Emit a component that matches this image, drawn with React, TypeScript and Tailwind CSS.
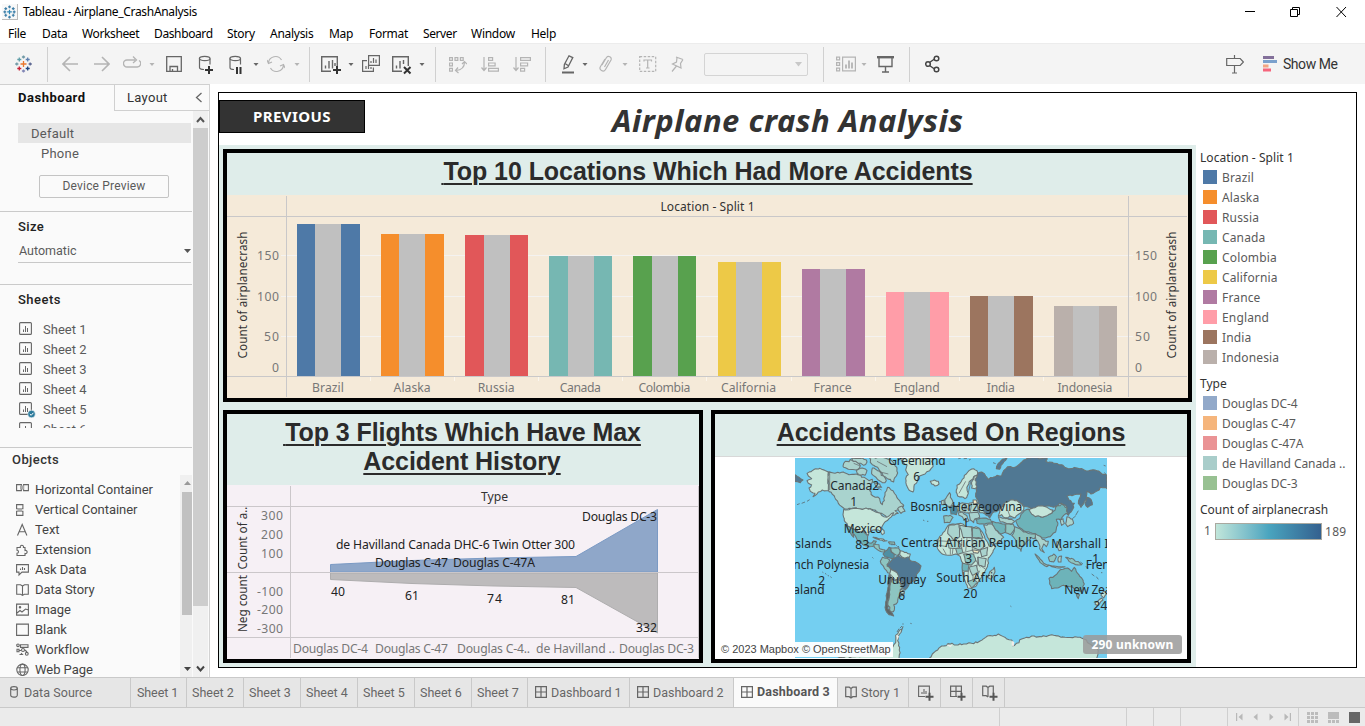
import React from "react";

const NOTO = "font-['Noto_Sans',sans-serif]";
const ROBO = "font-['Roboto',sans-serif]";

type Pt = [number, number];

/* ---------- small helpers ---------- */

function Icon({ w, h = 24, className = "", children }: { w: number; h?: number; className?: string; children: React.ReactNode }) {
  return (
    <svg width={w} height={h} viewBox={`0 0 ${w} ${h}`} fill="none" className={`shrink-0 ${className}`}>
      {children}
    </svg>
  );
}

function Caret({ className = "" }: { className?: string }) {
  return (
    <Icon w={6} className={className}>
      <path d="M.5 11h5l-2.500 3z" fill="currentColor" />
    </Icon>
  );
}

function Sep({ className = "" }: { className?: string }) {
  return <div className={`h-[35px] w-px shrink-0 bg-[#d0d0d0] ${className}`} />;
}

function plus(x: number, y: number, r: number, c: string, k: string) {
  return <path key={k} d={`M${x - r} ${y}h${2 * r}M${x} ${y - r}v${2 * r}`} stroke={c} strokeWidth="1.300" />;
}

/* ---------- title bar and menu ---------- */

function TitleBar() {
  const dots: Pt[] = [[8, 3], [4, 5], [12, 5], [3, 8.5], [13, 8.5], [4, 12], [12, 12], [8, 14]];
  return (
    <div className="flex h-[23px] shrink-0 items-center bg-white">
      <svg width="16" height="16" viewBox="0 0 16 16" className="ml-[2px] shrink-0 border-b border-r border-[#bbb] bg-[#f8f8f8]">
        {dots.map((d, i) => plus(d[0], d[1], 1.5, "#3d7ea8", "d" + i))}
        {plus(8, 8.5, 2.5, "#2f86b5", "c")}
      </svg>
      <div className={`ml-[5px] text-[12px] tracking-[-0.32px] text-black ${NOTO}`}>Tableau - Airplane_CrashAnalysis</div>
      <svg width="110" height="20" viewBox="1245 0 110 20" fill="none" stroke="#000" className="ml-auto mr-[10px]">
        <path d="M1245 9.500h10" />
        <path d="M1290.500 7.500h7v7h-7zM1292.500 7.500v-2h7v7h-2" />
        <path d="M1336.500 5l9.500 10M1346 5l-9.500 10" />
      </svg>
    </div>
  );
}

function MenuBar() {
  return (
    <div className={`flex h-[20px] shrink-0 items-center bg-white pl-[8px] pt-[2px] text-[12px] tracking-[-0.28px] text-black ${NOTO}`}>
      <span className="w-[34px]">File</span>
      <span className="w-[40px]">Data</span>
      <span className="w-[72px] tracking-[-0.38px]">Worksheet</span>
      <span className="w-[73px] tracking-[-0.38px]">Dashboard</span>
      <span className="w-[43px]">Story</span>
      <span className="w-[59px]">Analysis</span>
      <span className="w-[40px]">Map</span>
      <span className="w-[54px]">Format</span>
      <span className="w-[48px] tracking-[-0.4px]">Server</span>
      <span className="w-[60px]">Window</span>
      <span>Help</span>
    </div>
  );
}

/* ---------- toolbar ---------- */

function Toolbar() {
  return (
    <div className="flex h-[41px] shrink-0 items-center border-t border-[#ececec] bg-[#f4f4f4] pl-[15px] text-[#b4b4b4]">
      <Icon w={17}>
        {plus(8.5, 12, 3, "#e8762d", "a")}
        {plus(8.5, 5, 1.6, "#7099a6", "b")}
        {plus(8.5, 19, 1.6, "#8186b5", "c")}
        {plus(1.8, 12, 1.6, "#7099a6", "d")}
        {plus(15.2, 12, 1.6, "#5b6591", "e")}
        {plus(4.3, 7.5, 2, "#5f9ea8", "f")}
        {plus(12.7, 7.5, 2, "#5c7faf", "g")}
        {plus(4.3, 16.500, 2, "#c72035", "h")}
        {plus(12.7, 16.500, 2, "#1f447e", "i")}
      </Icon>
      <Sep className="ml-[15px]" />
      <Icon w={16} className="ml-[14px]"><path d="M16 12H1.500M8 5l-7 7 7 7" stroke="currentColor" strokeWidth="1.600" /></Icon>
      <Icon w={16} className="ml-[16px]"><path d="M0 12h14.500M8 5l7 7-7 7" stroke="currentColor" strokeWidth="1.600" /></Icon>
      <Icon w={18} className="ml-[13px]"><path d="M5 8H4a3.500 3.500 0 0 0 0 7h10a3.500 3.500 0 0 0 2-6.500M5 8h7M10 4.500L13.500 8 10 11" stroke="currentColor" strokeWidth="1.300" /></Icon>
      <Caret className="ml-[8px]" />
      <Icon w={16} className="ml-[11px] text-[#666]"><path d="M.7 4.700h14.600v14.600H.7zM4 19v-4.500h7.500V19M6.500 19v-2" stroke="currentColor" strokeWidth="1.300" /></Icon>
      <Icon w={16} className="ml-[16px] text-[#666]">
        <path d="M6 17.500c-3 0-4.500-.8-4.500-2V6.500M12 6.500v6" stroke="currentColor" strokeWidth="1.200" />
        <ellipse cx="6.700" cy="6.500" rx="5.300" ry="2.200" stroke="currentColor" strokeWidth="1.200" />
        <path d="M7 18h8M11 14v8" stroke="#333" strokeWidth="2" />
      </Icon>
      <Icon w={14} className="ml-[15px] text-[#666]">
        <path d="M5 17.500c-3 0-4-.8-4-2V6.500M11.500 6.500v6" stroke="currentColor" strokeWidth="1.200" />
        <ellipse cx="6.200" cy="6.500" rx="5.300" ry="2.200" stroke="currentColor" strokeWidth="1.200" />
        <path d="M8 15v7M11.500 15v7" stroke="#333" strokeWidth="2" />
      </Icon>
      <Caret className="ml-[10px] text-[#666]" />
      <Icon w={18} className="ml-[8px]">
        <path d="M1.500 11a7 7 0 0 1 13-3M16.500 13a7 7 0 0 1-13 3M0 8l1.500 3.500L5 10M18 16l-1.500-3.500L13 14" stroke="currentColor" strokeWidth="1.200" />
      </Icon>
      <Caret className="ml-[9px]" />
      <Sep className="ml-[9px]" />
      <Icon w={20} className="ml-[11px] text-[#666]">
        <path d="M10 19.300H.7V4.700h15.600V14M4.500 16.500v-3M8 16.500V9M11.500 16.500V8M14 14v-3" stroke="currentColor" strokeWidth="1.400" />
        <path d="M12 18h8M16 14v8" stroke="#333" strokeWidth="2" />
      </Icon>
      <Caret className="ml-[7px] text-[#666]" />
      <Icon w={18} className="ml-[8px] text-[#666]">
        <path d="M6.600 3.600h10.800v9.800H6.600zM5 8.600H.6v10.800h10.800v-4M9 11V9M11.500 11V6M14 11V7.500M4 17v-3M6.500 17v-3.500M9 17v-2" stroke="currentColor" strokeWidth="1.200" />
      </Icon>
      <Icon w={20} className="ml-[12px] text-[#666]">
        <path d="M10 19.300H.7V4.700h15.600V14M4.500 16.500v-3M8 16.500V9M11.500 12V8" stroke="currentColor" strokeWidth="1.400" />
        <path d="M12 15l6.500 6.500M18.500 15L12 21.500" stroke="#333" strokeWidth="2" />
      </Icon>
      <Caret className="ml-[7px] text-[#666]" />
      <Sep className="ml-[10px]" />
      <Icon w={18} className="ml-[13px]">
        <path d="M.6 5.600h2.800v2.800H.6zM6 5.600h2.800v2.800H6zM11.400 5.600h2.800v2.800h-2.800zM.6 11h2.800v2.800H.6zM.6 16.400h2.800v2.800H.6zM15.500 10c0 5-2.500 8-8.500 8.500M13 12l2.500-2.500L18 12M9 15.500L6.500 18.500l3 2.500" stroke="currentColor" strokeWidth="1.200" />
      </Icon>
      <Icon w={18} className="ml-[14px]">
        <path d="M3 5v13M.5 15.500L3 18.500l2.500-3M7.600 5.600h4v2.800h-4zM7.600 11h6.500v2.800H7.600zM7.600 16.400h9.800v2.800H7.600z" stroke="currentColor" strokeWidth="1.200" />
      </Icon>
      <Icon w={18} className="ml-[14px]">
        <path d="M3 5v13M.5 15.500L3 18.500l2.500-3M7.600 5.600h9.800v2.800H7.600zM7.600 11h7v2.800h-7zM7.600 16.400h4v2.800h-4z" stroke="currentColor" strokeWidth="1.200" />
      </Icon>
      <Sep className="ml-[14px]" />
      <Icon w={14} className="ml-[15px] text-[#666]">
        <path d="M8 3.800l3.800 1.800-4.800 9.400-4 1.800.4-4.400zM4 11.500l3.500 2.200" stroke="currentColor" strokeWidth="1.300" />
        <path d="M1 20.500h12" stroke="currentColor" strokeWidth="2" />
      </Icon>
      <Caret className="ml-[7px] text-[#666]" />
      <Icon w={14} className="ml-[11px]">
        <path d="M3 13l4.500-7.500a2.600 2.600 0 0 1 4.500 2.500L6.500 17.500a2.900 2.900 0 0 1-5-3L6 7M9.500 8L5.500 15" stroke="currentColor" strokeWidth="1.200" />
      </Icon>
      <Caret className="ml-[9px]" />
      <Icon w={18} className="ml-[11px]">
        <path d="M.7 4.700h16v14.600H.7z" stroke="currentColor" strokeWidth="1.200" strokeDasharray="2.500 1.500" />
        <path d="M5 9.500V8h7.500v1.500M8.700 8v8M7 16h3.500" stroke="currentColor" strokeWidth="1.200" />
      </Icon>
      <Icon w={14} className="ml-[14px]">
        <path d="M5 5l7 2.500M6 5.500L5.500 10 1.500 12l8.500 4-.5-4.500L12 7.500M5.500 14L1 19.500" stroke="currentColor" strokeWidth="1.200" />
      </Icon>
      <div className="ml-[19px] flex h-[23px] w-[104px] shrink-0 items-center justify-end rounded-[2px] border border-[#d4d4d4] pr-[5px] text-[#c8c8c8]">
        <svg width="7" height="5" viewBox="0 0 7 5"><path d="M0 0h7L3.500 4.500z" fill="currentColor" /></svg>
      </div>
      <Sep className="ml-[15px]" />
      <Icon w={20} className="ml-[12px]">
        <path d="M.6 5.100h3v2.800h-3zM.6 10.600h3v2.800h-3zM.6 16.100h3v2.800h-3zM6.600 5.100h12.800v13.800H6.600z" stroke="currentColor" strokeWidth="1.200" />
        <path d="M10 16.500v-4M13 16.500v-8M16 16.500v-6" stroke="currentColor" strokeWidth="1.800" />
      </Icon>
      <Caret className="ml-[5px]" />
      <Icon w={18} className="ml-[10px] text-[#666]">
        <path d="M0 5.200h17" stroke="currentColor" strokeWidth="2.400" />
        <path d="M2 6v8.500h13V6M8.500 14.500V20M5 20h7" stroke="currentColor" strokeWidth="1.400" />
      </Icon>
      <Sep className="ml-[14px]" />
      <Icon w={15} className="ml-[15px] text-[#444]">
        <path d="M4.500 10.500l5-3.500M4.500 13.500l5 3.500" stroke="currentColor" strokeWidth="1.400" />
        <circle cx="3" cy="12" r="2.300" stroke="currentColor" strokeWidth="1.500" />
        <circle cx="11.500" cy="6.500" r="2.300" stroke="currentColor" strokeWidth="1.500" />
        <circle cx="11.500" cy="17.500" r="2.300" stroke="currentColor" strokeWidth="1.500" />
      </Icon>
      <Icon w={18} className="ml-auto text-[#666]">
        <path d="M.7 6.500h13.500l3.200 3.500-3.200 3.500H.7zM8.500 3v3.500M8.500 13.500V21M6 21h5" stroke="currentColor" strokeWidth="1.200" />
      </Icon>
      <Icon w={15} className="ml-[19px]">
        <path d="M0 4h11v3H0z" fill="#83709a" />
        <path d="M0 8h14v3H0z" fill="#7ba1cd" />
        <path d="M0 12.500h5.500v3H0z" fill="#f3a583" />
        <path d="M0 16.500h8v3H0z" fill="#f6657c" />
      </Icon>
      <span className={`ml-[5px] mr-[27px] w-[55px] whitespace-nowrap text-[14px] tracking-[-0.45px] text-[#333] ${ROBO}`}>Show Me</span>
    </div>
  );
}

/* ---------- left panel ---------- */

function SheetIcon({ checked = false }: { checked?: boolean }) {
  return (
    <svg width="17" height="17" viewBox="0 0 17 17" fill="none" className="shrink-0">
      <rect x=".6" y="1.600" width="11.800" height="11.800" rx="1" stroke="#666" strokeWidth="1.100" />
      <path d="M4.500 11V8.500M6.500 11V5M8.500 11V7" stroke="#666" strokeWidth="1" />
      {checked && <circle cx="12.500" cy="13" r="3.800" fill="#2c7a9b" stroke="#fafafa" strokeWidth=".6" />}
      {checked && <path d="M10.800 13l1.400 1.300 2.200-2.500" stroke="#fff" strokeWidth="1" />}
    </svg>
  );
}

const OBJECTS: { name: string; icon: React.ReactNode }[] = [
  { name: "Horizontal Container", icon: <><path d="M.6 1.600h4.800v6H.6zM7.600 1.600h4.800v6H7.600z" /><path d="M4 2.500h4v4H4z" fill="#aaa" stroke="none" /></> },
  { name: "Vertical Container", icon: <><path d="M.6 1.600h6.300v4.200H.6zM.6 8.200h6.300v4.200H.6z" /><path d="M1.500 5h4.500v4H1.500z" fill="#aaa" stroke="none" /></> },
  { name: "Text", icon: <path d="M1.500 12.500L6.200 1.500l4.700 11M3.200 8.700h6" /> },
  { name: "Extension", icon: <path d="M1 4.500h3.300a1.700 1.700 0 1 1 3.200 0H9v3a1.600 1.600 0 1 1 0 3v2H1V10.300a1.500 1.500 0 1 0 0-3z" /> },
  { name: "Ask Data", icon: <><path d="M.6 1.600h11.800v7.500H6L3 12V9.100H.6z" /><path d="M4.500 7V5.500M6.500 7V4M8.500 7V5" /></> },
  { name: "Data Story", icon: <path d="M6.500 3L4.500 1.700H.7v9.500h4l1.800 1.200 1.800-1.200h4V1.700H8.500zM6.500 3v9" /> },
  { name: "Image", icon: <><path d="M.6 1.100h11.800v11H.6zM1 10l3-2.500 2 1.500 3.500-3 3 1" /><circle cx="4" cy="4.300" r=".7" /></> },
  { name: "Blank", icon: <path d="M.6 1.100h11.800v11.300H.6z" /> },
  { name: "Workflow", icon: <><path d="M4.500 1.800h7.500v2.600H4.500zM3.500 11.500h2.800l-1.300-1.300M9 7l2 2M3 7.500h2" /><circle cx="2" cy="2.300" r="1.300" /><path d="M1 6.300h2v2.400H1z" /><circle cx="7" cy="7" r="1.500" /><circle cx="10.800" cy="10.800" r="1.400" /></> },
  { name: "Web Page", icon: <><circle cx="6.500" cy="6.800" r="5.700" /><ellipse cx="6.500" cy="6.800" rx="2.600" ry="5.700" /><path d="M1.500 4.800h10M1.500 9h10" /></> },
];

function SidePanel() {
  return (
    <div className={`flex w-[210px] shrink-0 flex-col border-r border-[#d2d2d2] bg-[#fafafa] ${ROBO}`}>
      <div className="flex h-[27px] shrink-0 border-t border-[#d0d0d0] text-[13px]">
        <div className="w-[114px] pl-[18px] leading-[25px] font-bold tracking-[0.52px] text-[#111]">Dashboard</div>
        <div className="flex flex-1 items-center border-b border-l border-[#d0d0d0] pl-[12px] tracking-[0.3px] text-[#333]">
          Layout
          <svg width="8" height="12" viewBox="0 0 8 12" fill="none" className="ml-auto mr-[6px]"><path d="M6.500 1L1.500 5.500l5 4.500" stroke="#666" strokeWidth="1.300" /></svg>
        </div>
      </div>
      <div className="flex min-h-0 flex-1">
        <div className="flex w-[192px] flex-col text-[13px] text-[#5a5a5a]">
          <div className="ml-[18px] mr-px mt-[12px] h-[20px] bg-[#e6e6e6] pl-[13px] leading-[21px] tracking-[0.25px]">Default</div>
          <div className="h-[20px] pl-[41px] leading-[21px] tracking-[0.25px]">Phone</div>
          <div className="ml-[39px] mt-[12px] flex h-[23px] w-[130px] shrink-0 items-center justify-center rounded-[2px] border border-[#c4c4c4] pb-px text-[12px] tracking-[0.18px]">Device Preview</div>
          <div className="mt-[13px] h-px shrink-0 bg-[#cacaca]" />
          <div className="ml-[18px] mt-[5px] h-[20px] leading-[20px] font-medium tracking-[0.4px] text-[#222]">Size</div>
          <div className="ml-[18px] mr-px mt-[4px] flex h-[22px] shrink-0 items-center justify-between border-b border-[#c8c8c8] pl-px text-[12.500px]">
            <span>Automatic</span>
            <svg width="7" height="5" viewBox="0 0 7 5"><path d="M0 0h7L3.500 4z" fill="#555" /></svg>
          </div>
          <div className="mt-[21px] h-px shrink-0 bg-[#cacaca]" />
          <div className="ml-[18px] mt-[5px] h-[20px] shrink-0 leading-[20px] font-medium tracking-[0.5px] text-[#222]">Sheets</div>
          <div className="ml-[19px] mt-[9px] h-[109px] shrink-0 overflow-hidden">
            {[1, 2, 3, 4, 5, 6].map((n) => (
              <div key={n} className="flex h-[20px] items-center gap-[7px] leading-[20px]">
                <SheetIcon checked={n === 5} />
                <span className="mt-px">Sheet {n}</span>
              </div>
            ))}
          </div>
          <div className="mt-[19px] h-px shrink-0 bg-[#cacaca]" />
          <div className="ml-[12px] mt-[2px] h-[20px] shrink-0 leading-[20px] font-medium tracking-[0.42px] text-[#333]">Objects</div>
          <div className="mt-[5px] flex min-h-0 flex-1 overflow-hidden">
            <div className="mt-[5px] flex-1 pl-[16px] text-[#444]">
              {OBJECTS.map((o) => (
                <div key={o.name} className="flex h-[20px] items-center gap-[6px] leading-[20px] tracking-[-0.05px]">
                  <svg width="13" height="14" viewBox="0 0 13 14" fill="none" stroke="#666" strokeWidth="1.100" className="shrink-0">{o.icon}</svg>
                  <span className="whitespace-nowrap">{o.name}</span>
                </div>
              ))}
            </div>
            <div className="flex w-[12px] flex-col items-end bg-[#f0f0f0]">
              <svg width="10" height="17" viewBox="0 0 10 17" className="shrink-0"><path d="M2 10h7L5.500 6z" fill="#999" /></svg>
              <div className="h-[123px] w-[10px] bg-[#c1c1c1]" />
              <svg width="10" height="17" viewBox="0 0 10 17" className="mt-auto shrink-0"><path d="M2 7h7l-3.500 4z" fill="#444" /></svg>
            </div>
          </div>
        </div>
        <div className="ml-[1px] flex w-[15px] flex-col bg-[#f0f0f0]">
          <svg width="15" height="17" viewBox="0 0 15 17" fill="none"><path d="M4 11l3.500-4 3.500 4" stroke="#555" strokeWidth="2" /></svg>
          <div className="h-[478px] bg-[#cdcdcd]" />
          <svg width="15" height="17" viewBox="0 0 15 17" fill="none" className="mt-auto"><path d="M4 6.500l3.500 4 3.500-4" stroke="#444" strokeWidth="2" /></svg>
        </div>
      </div>
    </div>
  );
}

/* ---------- charts ---------- */

const LOCATIONS: { name: string; color: string; top: number; w: number }[] = [
  { name: "Brazil", color: "#4e79a7", top: 224, w: 32 },
  { name: "Alaska", color: "#f58e2c", top: 234, w: 37 },
  { name: "Russia", color: "#e15759", top: 235, w: 37 },
  { name: "Canada", color: "#76b7b2", top: 256, w: 41 },
  { name: "Colombia", color: "#58a14e", top: 256, w: 52 },
  { name: "California", color: "#edc947", top: 262, w: 55 },
  { name: "France", color: "#b07aa2", top: 269, w: 38 },
  { name: "England", color: "#ff9da8", top: 292, w: 46 },
  { name: "India", color: "#9c755f", top: 296, w: 28 },
  { name: "Indonesia", color: "#bab0ab", top: 306, w: 55 },
];

function Label({ x, y, w, anchor = "start", color = "#333", size = 12.2, rotate = false, children }: {
  x: number; y: number; w: number; anchor?: "start" | "middle" | "end"; color?: string; size?: number; rotate?: boolean; children: string;
}) {
  return (
    <text x={x} y={y} fill={color} fontSize={size} textAnchor={anchor} textLength={w} transform={rotate ? `rotate(-90 ${x} ${y})` : undefined}>
      {children}
    </text>
  );
}

function LocationChart() {
  return (
    <svg width="961" height="203" viewBox="227 195 961 203" className={`block ${NOTO}`}>
      <rect x="227" y="195" width="961" height="203" fill="#f5ead9" />
      <path d="M281 255.500h852M281 296.500h852M281 336.500h852" stroke="#f4f2f0" />
      {LOCATIONS.slice(1).map((l, i) => (
        <path key={l.name} d={`M${Math.round(370 + i * 84.1)}.500 377v4`} stroke="#fbf6ee" />
      ))}
      <path d="M227 216.500h960M227 376.500h960M286.500 196v201M1128.500 196v201" stroke="#c9c8c9" />
      {LOCATIONS.map((l, i) => {
        const x = Math.round(297 + i * 84.1);
        return (
          <g key={l.name}>
            <rect x={x} y={l.top} width="63" height={376 - l.top} fill={l.color} />
            <rect x={Math.round(315.2 + i * 84.15)} y={l.top} width="26" height={376 - l.top} fill="#c0c0c0" />
            <Label x={328 + i * 84.1} y={392} w={l.w} anchor="middle" color="#777">{l.name}</Label>
          </g>
        );
      })}
      <Label x={707.500} y={211} w={94} anchor="middle" size={12}>Location - Split 1</Label>
      {[["150", 260, 22], ["100", 301, 22], ["50", 341, 15], ["0", 372, 7]].map(([t, y, w]) => (
        <g key={t}>
          <Label x={279} y={y as number} w={w as number} anchor="end" color="#777">{t as string}</Label>
          <Label x={1135} y={y as number} w={w as number} color="#777">{t as string}</Label>
        </g>
      ))}
      <Label x={247} y={358.500} w={127} rotate size={11.7}>Count of airplanecrash</Label>
      <Label x={1176} y={358.500} w={127} rotate size={11.7}>Count of airplanecrash</Label>
    </svg>
  );
}

function FlightChart() {
  return (
    <svg width="472" height="174" viewBox="227 485 472 174" className={`block ${NOTO}`}>
      <rect x="227" y="485" width="472" height="174" fill="#f6f0f5" />
      <path d="M330.500 564.500L412 560.500 494 558 576 556.500 657.500 509.500V572h-327z" fill="#8fa7c9" stroke="#7b9ac4" />
      <path d="M330.500 573v6.500L412 583.500 494 586 576 587.500 657.500 633V573z" fill="#bdbbbc" stroke="#aeadae" />
      <path d="M227 506.500h472M227 572.500h472M227 637.500h472M290.500 486v172M698.500 486v172" stroke="#cbc7ca" />
      <Label x={494.500} y={501} w={27} anchor="middle">Type</Label>
      <Label x={283} y={520} w={22} anchor="end" color="#777">300</Label>
      <Label x={283} y={539} w={22} anchor="end" color="#777">200</Label>
      <Label x={283} y={558} w={22} anchor="end" color="#777">100</Label>
      <Label x={283} y={596} w={26} anchor="end" color="#777">-100</Label>
      <Label x={283} y={614} w={26} anchor="end" color="#777">-200</Label>
      <Label x={283} y={633} w={26} anchor="end" color="#777">-300</Label>
      <Label x={247} y={569.500} w={63} rotate size={11.7}>Count of a..</Label>
      <Label x={247} y={632} w={57} rotate size={11.7}>Neg count</Label>
      <Label x={582} y={521} w={75} color="#222">Douglas DC-3</Label>
      <Label x={336} y={549} w={239} color="#222">de Havilland Canada DHC-6 Twin Otter 300</Label>
      <Label x={375} y={567} w={73} color="#222">Douglas C-47</Label>
      <Label x={453} y={567} w={82} color="#222">Douglas C-47A</Label>
      <Label x={331} y={596} w={14} color="#222">40</Label>
      <Label x={405} y={600} w={14} color="#222">61</Label>
      <Label x={487} y={603} w={15} color="#222">74</Label>
      <Label x={561} y={604} w={14} color="#222">81</Label>
      <Label x={636} y={632} w={21} color="#222">332</Label>
      <Label x={293} y={653} w={75} color="#777">Douglas DC-4</Label>
      <Label x={375} y={653} w={73} color="#777">Douglas C-47</Label>
      <Label x={457} y={653} w={73} color="#777">Douglas C-4..</Label>
      <Label x={536} y={653} w={79} color="#777">de Havilland ..</Label>
      <Label x={619} y={653} w={75} color="#777">Douglas DC-3</Label>
    </svg>
  );
}

/* ---------- map ---------- */

/* Parses "x,y x,y ..." and breaks each edge with a small deterministic offset so coasts look natural. */
function coast(points: string, rough: number): string {
  const pts = points.trim().split(/\s+/).map((p) => p.split(",").map(Number) as Pt);
  let seed = points.length * 7 + 3;
  const rnd = () => {
    seed = (seed * 1103515245 + 12345) % 2147483648;
    return seed / 2147483648 - 0.5;
  };
  let d = "";
  pts.forEach((p, i) => {
    const q = pts[(i + 1) % pts.length];
    d += `${i ? "L" : "M"}${p[0]} ${p[1]}`;
    const len = Math.hypot(q[0] - p[0], q[1] - p[1]);
    const n = Math.max(1, Math.round(len / 7));
    for (let k = 1; k < n; k++) {
      const x = p[0] + ((q[0] - p[0]) * k) / n + rnd() * rough;
      const y = p[1] + ((q[1] - p[1]) * k) / n + rnd() * rough;
      d += `L${x.toFixed(1)} ${y.toFixed(1)}`;
    }
  });
  return d + "Z";
}

const LIGHT = "#c5e6da";
const PALE = "#a9d3ce";
const MID = "#8dc5c1";
const TEAL = "#6db3b9";
const DARK = "#507893";

const LANDS: [string, string, number?][] = [
  [LIGHT, "130,66 110,58 92,56 82,62 66,70 70,78 80,86 66,92 70,100 80,104 72,114 76,124 90,130 84,140 100,126 112,120 130,122"],
  [DARK, "30,74 42,82 54,90 46,98 30,94", 3],
  [PALE, "130,66 150,70 175,66 192,74 215,72 238,82 252,92 262,88 258,104 254,122 264,138 284,146 292,164 298,152 300,128 308,112 324,122 338,146 356,166 350,176 330,182 340,190 322,196 306,204 296,194 284,190 270,180 255,176 178,176 160,160 148,138 130,120"],
  [PALE, "176,40 196,28 214,34 226,46 214,60 190,58 176,52", 6],
  [PALE, "200,24 232,24 246,36 236,46 220,40 206,34", 6],
  [PALE, "254,24 300,24 322,34 336,56 334,78 326,96 316,88 300,80 288,66 278,52 262,44", 8],
  [PALE, "214,62 232,54 246,62 240,76 222,74", 5],
  [PALE, "262,54 282,62 296,78 304,92 292,98 276,86 262,74", 7],
  [PALE, "268,98 284,102 290,112 276,112", 4],
  [PALE, "338,176 352,168 360,184 348,190", 4],
  [LIGHT, "176,178 255,176 268,184 286,190 296,200 312,198 326,188 312,206 298,218 290,232 298,250 292,254 284,242 264,240 252,246 250,256 238,244 222,246 204,238 188,228 178,212 174,194"],
  [TEAL, "186,228 204,236 222,246 236,246 248,258 246,276 258,280 266,272 274,274 268,288 252,290 234,284 218,272 208,254 202,248 206,262 196,248", 3],
  [MID, "266,282 282,284 284,296 300,300 298,306 282,302 268,292", 3],
  [LIGHT, "264,262 288,266 306,272 296,274 278,268", 3],
  [MID, "310,276 328,276 330,284 314,282", 3],
  ["#4f8fa3", "300,304 312,292 318,294 318,306 328,312 326,328 314,324 300,320 294,312", 3],
  [MID, "318,294 340,294 346,304 338,316 328,312 320,306", 3],
  [LIGHT, "346,302 376,312 370,326 352,322 344,314", 3],
  [MID, "292,322 304,324 314,330 306,344 316,356 318,372 308,368 296,350 286,334", 3],
  [DARK, "324,326 340,316 352,324 372,322 380,334 396,338 408,348 404,362 394,374 392,388 378,396 370,408 360,420 348,410 354,398 344,386 336,368 318,358 306,348 314,338"],
  [LIGHT, "318,358 336,368 342,382 332,390 322,386 314,372", 3],
  [LIGHT, "340,388 352,396 350,404 340,400", 3],
  [MID, "320,388 334,392 350,406 348,418 358,424 356,436 340,442 338,456 326,464 328,480 318,486 310,468 312,440 314,412"],
  ["#5d6668", "312,374 320,386 314,412 310,448 308,476 322,490 326,498 312,494 302,480 302,456 308,420", 5],
  [LIGHT, "346,418 358,424 356,432 346,430", 2],
  [LIGHT, "346,24 446,24 440,34 444,50 434,62 420,72 404,78 398,92 388,104 384,126 372,120 364,104 362,86 370,74 362,60 366,46 356,38"],
  [LIGHT, "436,94 448,90 460,94 462,102 450,108 440,102", 4],
  [LIGHT, "514,120 516,106 528,96 538,76 552,62 566,56 576,62 578,74 566,80 552,96 546,116 550,130 540,146 530,140 518,138"],
  [LIGHT, "560,96 568,78 578,74 582,104 570,116 560,114", 4],
  [PALE, "482,162 480,148 488,136 494,128 496,142 504,158 500,168 486,168", 4],
  [PALE, "470,152 478,150 478,162 470,164", 2],
  ["#4b8ba0", "494,170 508,166 520,176 514,194 498,192", 3],
  [MID, "476,198 496,196 504,202 494,218 478,218", 3],
  [PALE, "516,168 532,158 552,160 570,156 582,166 580,184 566,192 548,188 530,186 518,184", 4],
  ["#f1e7c0", "564,150 574,150 578,160 566,162", 2],
  [PALE, "520,188 532,186 546,198 552,212 544,216 532,200 522,196", 3],
  [PALE, "552,188 580,188 584,202 570,206 566,218 556,210", 3],
  [PALE, "574,160 600,164 622,182 618,194 600,192 584,188", 3],
  [DARK, "578,70 590,66 602,78 610,88 624,82 636,76 650,78 656,62 668,50 690,52 704,42 716,30 728,24 786,24 782,34 806,40 830,44 852,56 876,54 902,62 930,60 966,76 966,116 946,112 934,124 918,132 906,124 904,148 888,172 880,160 888,132 868,134 846,138 852,150 868,160 862,180 850,196 844,190 846,172 830,160 806,172 784,168 762,172 738,176 714,166 694,150 668,158 656,162 644,178 626,186 614,204 600,190 584,164 572,140 576,110 570,90"],
  [DARK, "634,56 640,40 652,28 666,24 648,46 644,58", 4],
  [LIGHT, "644,180 656,162 676,150 696,152 714,168 716,180 702,192 690,204 676,198 660,204 650,194 640,198", 4],
  [PALE, "640,200 660,204 680,208 690,214 680,222 660,218 646,216", 4],
  [TEAL, "572,208 596,204 616,208 622,218 598,222 576,220", 3],
  [TEAL, "622,214 640,218 660,222 662,246 648,252 632,240 622,226", 3],
  [PALE, "596,224 620,222 632,240 642,250 656,262 644,276 622,286 614,272 602,248"],
  [MID, "662,222 684,222 690,236 676,254 662,248", 3],
  [MID, "690,230 704,236 716,246 740,252 756,252 748,266 738,262 724,276 712,288 708,304 700,294 692,270 680,256 688,244"],
  [PALE, "752,250 764,256 772,268 790,274 784,290 776,282 770,296 778,308 768,302 762,282 752,266", 4],
  [TEAL, "692,212 706,200 718,182 732,178 746,194 772,202 800,190 812,172 830,162 846,174 848,190 836,196 826,210 814,208 818,226 812,246 796,260 778,264 758,256 742,250 716,242 702,232"],
  [LIGHT, "728,178 744,174 762,168 786,172 804,180 800,190 772,202 746,196"],
  [PALE, "826,210 834,206 838,220 830,226", 3],
  [PALE, "846,200 862,208 866,220 848,230 842,222", 4],
  [DARK, "906,142 918,148 922,164 908,172 900,160", 4],
  [MID, "750,312 762,322 776,340 792,346 786,350 766,338", 3],
  [MID, "790,322 806,312 814,320 806,336 794,334", 3],
  [PALE, "788,346 820,350 840,350 820,354", 3],
  [PALE, "816,274 824,284 830,300 822,302 814,288", 4],
  [PALE, "820,322 830,318 828,336 820,336", 3],
  [MID, "842,322 866,328 890,344 872,344 852,334", 4],
  [TEAL, "792,386 808,378 820,366 834,358 848,354 860,364 868,352 876,368 890,384 898,402 890,424 874,422 858,410 836,406 816,414 800,416 794,402"],
  [TEAL, "874,432 884,434 880,446", 2],
  [LIGHT, "956,424 966,430 956,444 948,436", 4],
  [LIGHT, "930,462 950,444 954,450 940,466", 4],
  [LIGHT, "474,248 488,228 506,222 526,220 540,228 560,230 582,234 590,244 600,266 612,288 632,288 624,306 610,324 608,344 600,364 588,384 576,404 560,416 548,414 540,392 532,364 534,340 526,320 512,312 490,316 472,312 458,296 456,270"],
  [PALE, "492,226 522,222 524,260 508,272 488,250", 2],
  [PALE, "524,226 560,232 562,262 534,262", 2],
  [MID, "562,234 584,236 594,264 562,262", 2],
  [PALE, "488,272 512,270 530,284 520,296 492,294", 2],
  [MID, "512,296 530,294 534,308 518,314", 2],
  [PALE, "560,264 590,266 600,288 584,300 562,292", 2],
  ["#f1e7c0", "562,300 584,302 578,310 566,308", 2],
  [MID, "536,312 566,312 572,332 558,346 542,338", 2],
  [TEAL, "532,340 552,344 550,364 532,362", 2],
  [PALE, "552,352 574,346 580,366 562,376", 2],
  [MID, "548,396 566,388 578,398 560,414", 2],
  [PALE, "586,300 608,292 606,316 590,320", 2],
  [PALE, "578,322 604,326 600,350 582,346", 2],
  [PALE, "614,366 628,352 630,366 618,388 608,382", 3],
];

const BORDERS =
  "M496 294v20M504 294l-2 18M530 264v30M546 264l-4 40M534 308l30-8M562 262v40M572 330l14 22M580 320l-4 30M550 364l-2 30M564 376v14M584 362l-12 28M456 272l30 2M462 286l24 4M474 296l10 18M588 348l14 10M522 130l20-36M550 128l8-36M540 158v28M560 160l-4 26M530 174l26 4M660 206l28-2M668 180l8 22M316 372l16 18M206 40l20 8M276 34l30 16M286 66l24 6M270 110l20 10M134 64v56";

const SPECKS =
  "M36 164l8-3M50 160l10-4M66 154l8-5M414 210l4 2M426 214h4M262 322l3 3M120 370l4 3M128 376l4 2M112 366l3 2M136 380l4 3M676 468l3 2M352 522h4M376 520l4 1M336 546l6-10M345 534l6-6M840 20l4 4M888 172l8-10M880 182l-8 14M872 198l-10 8M886 336l8 6M902 350l8 4M920 372l8 6M934 380l6 8M948 368h4M318 284h8M334 286l4 4M340 288l2 6M624 38l8 3M520 26l8-2M536 26l10-1M552 30l5-2M956 46l6 2M958 68l4 3";

function MapLabel({ x, y, w, children }: { x: number; y: number; w: number; children: string }) {
  return <text x={x} y={y} textLength={w} fontSize="36" fill="#1f2a2e">{children}</text>;
}

function RegionMap() {
  return (
    <svg width="312" height="200" viewBox="30 24 936 600" className={`block shrink-0 ${NOTO}`}>
      <rect x="30" y="24" width="936" height="600" fill="#74cff1" />
      <g stroke="#6b7475" strokeWidth="3.200" strokeLinejoin="round">
        {LANDS.map(([fill, pts, rough], i) => (
          <path key={i} d={coast(pts, rough ?? 5)} fill={fill} />
        ))}
        <path d={coast("432,630 442,612 458,600 470,588 496,582 530,584 560,580 584,574 602,562 622,558 640,552 664,566 680,570 684,588 694,580 712,566 740,558 770,560 800,554 840,562 870,560 898,568 924,590 940,602 932,630", 6)} fill="#c5e6da" />
        <path d={coast("140,630 170,622 210,620 280,612 318,600 332,578 332,556 344,540 354,530 344,552 338,572 344,592 342,630", 5)} fill="#c5e6da" />
      </g>
      <path d={BORDERS} stroke="#6b7475" strokeWidth="2.400" fill="none" />
      <path d={SPECKS} stroke="#5f7d88" strokeWidth="3" fill="none" />
      <path d="M484 584l18 2-6 6zM680 572l8 4-2 14-6-4zM334 556l8 2-4 12z" fill="#f0ece8" />
      <MapLabel x={310} y={45} w={172}>Greenland</MapLabel>
      <MapLabel x={385} y={93} w={20}>6</MapLabel>
      <MapLabel x={136} y={120} w={146}>Canada2</MapLabel>
      <MapLabel x={196} y={168} w={20}>1</MapLabel>
      <MapLabel x={376} y={184} w={336}>Bosnia-Herzegovina</MapLabel>
      <MapLabel x={532} y={232} w={20}>1</MapLabel>
      <MapLabel x={176} y={249} w={116}>Mexico</MapLabel>
      <MapLabel x={211} y={297} w={42}>83</MapLabel>
      <MapLabel x={348} y={291} w={410}>Central African Republic</MapLabel>
      <MapLabel x={541} y={338} w={20}>3</MapLabel>
      <MapLabel x={31} y={293} w={109}>slands</MapLabel>
      <MapLabel x={799} y={293} w={172}>Marshall I</MapLabel>
      <MapLabel x={922} y={340} w={20}>1</MapLabel>
      <MapLabel x={25} y={357} w={228}>nch Polynesia</MapLabel>
      <MapLabel x={902} y={357} w={72}>Fren</MapLabel>
      <MapLabel x={100} y={404} w={20}>2</MapLabel>
      <MapLabel x={25} y={432} w={94}>aland</MapLabel>
      <MapLabel x={280} y={402} w={143}>Uruguay</MapLabel>
      <MapLabel x={340} y={449} w={20}>6</MapLabel>
      <MapLabel x={454} y={396} w={208}>South Africa</MapLabel>
      <MapLabel x={535} y={444} w={42}>20</MapLabel>
      <MapLabel x={838} y={432} w={141}>New Zea</MapLabel>
      <MapLabel x={925} y={480} w={42}>24</MapLabel>
    </svg>
  );
}

/* ---------- dashboard canvas ---------- */

const LOCATION_SWATCHES: [string, string][] = [
  ["Brazil", "bg-[#4e79a7]"],
  ["Alaska", "bg-[#f58e2c]"],
  ["Russia", "bg-[#e15759]"],
  ["Canada", "bg-[#76b7b2]"],
  ["Colombia", "bg-[#58a14e]"],
  ["California", "bg-[#edc947]"],
  ["France", "bg-[#b07aa2]"],
  ["England", "bg-[#ff9da8]"],
  ["India", "bg-[#9c755f]"],
  ["Indonesia", "bg-[#bab0ab]"],
];

const TYPE_SWATCHES: [string, string][] = [
  ["Douglas DC-4", "bg-[#92a9c9]"],
  ["Douglas C-47", "bg-[#f5b57c]"],
  ["Douglas C-47A", "bg-[#ea9395]"],
  ["de Havilland Canada ..", "bg-[#a9cdca]"],
  ["Douglas DC-3", "bg-[#98c192]"],
];

function Swatches({ items, className }: { items: [string, string][]; className: string }) {
  return (
    <>
      {items.map(([name, bg]) => (
        <div key={name} className="flex h-[20px] items-center pl-[3px]">
          <div className={`h-[14px] w-[14px] shrink-0 ${bg}`} />
          <span className={`ml-[5px] mt-px whitespace-nowrap text-[#5a5a5a] ${className}`}>{name}</span>
        </div>
      ))}
    </>
  );
}

function Legend() {
  return (
    <div className={`flex flex-1 flex-col pl-[4px] text-[12px] text-[#333] ${NOTO}`}>
      <div className="mt-[3px] h-[19px] leading-[20px] tracking-[0.06px]">Location - Split 1</div>
      <Swatches items={LOCATION_SWATCHES} className="tracking-[0.15px]" />
      <div className="mt-[7px] h-[19px] leading-[20px]">Type</div>
      <Swatches items={TYPE_SWATCHES} className="tracking-[-0.08px]" />
      <div className="mt-[7px] h-[19px] whitespace-nowrap leading-[20px]">Count of airplanecrash</div>
      <div className="flex h-[24px] items-center text-[#5a5a5a]">
        <span className="w-[15px] pl-[4px]">1</span>
        <div className="h-[17px] w-[107px] border border-[#a9a9a0] bg-linear-to-r from-[#c1e6da] via-[#4aa5bf] to-[#34618f]" />
        <span className="ml-[3px] mt-px tracking-[0.3px]">189</span>
      </div>
    </div>
  );
}

function Heading({ className = "", children }: { className?: string; children: React.ReactNode }) {
  return (
    <h2 className={`shrink-0 text-center font-['Liberation_Sans',Arial,sans-serif] text-[25px] font-bold leading-[29px] text-[#2b2b2b] underline decoration-2 underline-offset-[3px] ${className}`}>
      {children}
    </h2>
  );
}

function Canvas() {
  return (
    <div className="flex min-w-0 flex-1 bg-white pb-[9px] pl-[8px] pr-[8px] pt-[8px]">
      <div className="flex min-w-0 flex-1 flex-col border border-black">
        <div className={`flex h-[52px] shrink-0 items-start ${NOTO}`}>
          <div className="mt-[7px] flex h-[33px] w-[146px] items-center justify-center border border-black bg-[#333] text-[15px] font-bold tracking-[0.4px] text-white">PREVIOUS</div>
          <h1 className="ml-[247px] mt-[6px] whitespace-nowrap text-[31px] font-bold italic leading-[43px] tracking-[0.5px] text-[#333]">Airplane crash Analysis</h1>
        </div>
        <div className="flex min-h-0 flex-1">
          <div className="flex w-[977px] shrink-0 flex-col gap-[8px] bg-[#dfedea] p-[4px]">
            <section className="h-[253px] w-[969px] shrink-0 border-4 border-black">
              <Heading className="h-[42px] pr-px pt-[4px] tracking-[-0.07px]"><span className="text-[8px] leading-none">&nbsp;</span>Top 10 Locations Which Had More Accidents</Heading>
              <LocationChart />
            </section>
            <div className="flex gap-[8px]">
              <section className="h-[253px] w-[480px] shrink-0 border-4 border-black">
                <Heading className="h-[71px] pr-[2px] pt-[4px] tracking-[-0.08px]"><span className="text-[8px] leading-none">&nbsp;</span>Top 3 Flights Which Have Max<br />Accident History</Heading>
                <FlightChart />
              </section>
              <section className="flex h-[253px] w-[480px] shrink-0 flex-col border-4 border-black">
                <Heading className="h-[42px] pt-[4px]">Accidents Based On Regions</Heading>
                <div className="relative flex flex-1 justify-center border-t border-[#d8d8d8] bg-white pt-px">
                  <RegionMap />
                  <div className="absolute bottom-[2px] left-0 h-[15px] bg-white/95 pl-[6px] pr-[2px] font-['Liberation_Sans',Arial,sans-serif] text-[11px] leading-[15px] text-[#444]">© 2023 Mapbox © OpenStreetMap</div>
                  <div className={`absolute bottom-[5px] right-[5px] h-[19px] w-[99px] rounded-[3px] bg-[#9a9a9a]/85 text-center text-[12px] font-bold leading-[19px] tracking-[0.2px] text-white ${NOTO}`}>290 unknown</div>
                </div>
              </section>
            </div>
          </div>
          <Legend />
        </div>
      </div>
    </div>
  );
}

/* ---------- bottom tabs and status bar ---------- */

function GridGlyph() {
  return (
    <svg width="12" height="12" viewBox="0 0 12 12" fill="none" stroke="#666" strokeWidth="1.200" className="mb-[2px] shrink-0">
      <path d="M.6 .6h10.800v10.800H.6zM6 .6v10.800M.6 6h10.800" />
    </svg>
  );
}

function BookGlyph() {
  return (
    <svg width="12" height="13" viewBox="0 0 12 13" fill="none" stroke="#666" strokeWidth="1.200" className="mb-px shrink-0">
      <path d="M6 2.500L4.200 1.200H.7v9.500h3.500L6 12l1.800-1.300h3.500V1.200H7.800zM6 2.500V12" />
    </svg>
  );
}

function Tabs() {
  const cell = "flex h-full shrink-0 items-center border-r border-[#c9c9c9] whitespace-nowrap";
  return (
    <div className={`flex h-[31px] shrink-0 border-b border-t border-[#c9c9c9] bg-[#e6e6e6] text-[12.500px] text-[#666] ${ROBO}`}>
      <div className={`${cell} w-[131px] pl-[10px]`}>
        <svg width="8" height="12" viewBox="0 0 8 12" fill="none" stroke="#666" strokeWidth="1.100" className="mb-[2px] mr-[6px]">
          <ellipse cx="4" cy="2.300" rx="3.300" ry="1.700" />
          <path d="M.7 2.300v7c0 2.400 6.600 2.400 6.600 0v-7" />
        </svg>
        <span className="pt-px tracking-[0.05px]">Data Source</span>
      </div>
      <div className={`${cell} w-[56px] pl-[6px] pt-px tracking-[-0.1px]`}>Sheet 1</div>
      <div className={`${cell} w-[57px] pl-[5px] pt-px`}>Sheet 2</div>
      <div className={`${cell} w-[57px] pl-[5px] pt-px`}>Sheet 3</div>
      <div className={`${cell} w-[57px] pl-[5px] pt-px`}>Sheet 4</div>
      <div className={`${cell} w-[57px] pl-[5px] pt-px`}>Sheet 5</div>
      <div className={`${cell} w-[57px] pl-[5px] pt-px`}>Sheet 6</div>
      <div className={`${cell} w-[56px] pl-[5px] pt-px`}>Sheet 7</div>
      <div className={`${cell} w-[102px] gap-[4px] pl-[7px]`}><GridGlyph /><span className="pt-px">Dashboard 1</span></div>
      <div className={`${cell} w-[104px] gap-[4px] pl-[7px]`}><GridGlyph /><span className="pt-px">Dashboard 2</span></div>
      <div className={`${cell} w-[104px] gap-[4px] bg-[#fafafa] pl-[7px] font-bold text-[#555]`}><GridGlyph /><span className="mb-px tracking-[0.2px]">Dashboard 3</span></div>
      <div className={`${cell} w-[71px] gap-[4px] pl-[7px]`}><BookGlyph /><span className="pt-px">Story 1</span></div>
      <div className={`${cell} w-[32px] pl-[9px]`}>
        <svg width="16" height="16" viewBox="0 0 16 16" fill="none" stroke="#666" strokeWidth="1.100"><path d="M7 11.500H.6V1.100h10.800V8M4 9V7M6 9V4M8 9V6" /><path d="M7.500 11.800h8M11.500 7.800v8" stroke="#555" strokeWidth="2" /></svg>
      </div>
      <div className={`${cell} w-[32px] pl-[9px]`}>
        <svg width="16" height="16" viewBox="0 0 16 16" fill="none" stroke="#666" strokeWidth="1.200"><path d="M7 11.500H.6V1.100h10.800V8M6 1v10.500M.6 6.300h10.800" /><path d="M7.500 11.800h8M11.500 7.800v8" stroke="#555" strokeWidth="2" /></svg>
      </div>
      <div className={`${cell} w-[32px] pl-[9px]`}>
        <svg width="16" height="16" viewBox="0 0 16 16" fill="none" stroke="#666" strokeWidth="1.200"><path d="M6 2.500L4.200 1.200H.7v9.500h3.500L6 12M6 2.500L7.800 1.200h3.500V8M6 2.500V12" /><path d="M7.500 11.800h8M11.500 7.800v8" stroke="#555" strokeWidth="2" /></svg>
      </div>
    </div>
  );
}

function StatusBar() {
  return (
    <div className="flex h-[18px] shrink-0 items-center bg-[#ebebeb]">
      <div className="h-full w-[1000px] border-r border-[#cfcfcf]" />
      <div className="h-full w-[127px] border-r border-[#cfcfcf]" />
      <div className="h-full w-[27px] border-r border-[#cfcfcf]" />
      <div className="h-full w-[27px] border-r border-[#cfcfcf]" />
      <div className="h-full w-[47px] border-r border-[#cfcfcf]" />
      <div className="flex h-full w-[71px] items-center justify-between border-r border-[#cfcfcf] pl-[8px] pr-[7px] text-[#b8b8b8]">
        <svg width="7" height="8" viewBox="0 0 7 8" fill="currentColor"><path d="M0 0h1.200v8H0zM6.500 .5v7L2.500 4z" /></svg>
        <svg width="5" height="8" viewBox="0 0 5 8" fill="currentColor"><path d="M4.500 .5v7L.5 4z" /></svg>
        <svg width="5" height="8" viewBox="0 0 5 8" fill="currentColor"><path d="M.5 .5v7L4.500 4z" /></svg>
        <svg width="7" height="8" viewBox="0 0 7 8" fill="currentColor"><path d="M5.800 0H7v8H5.800zM.5 .5v7l4-3.500z" /></svg>
      </div>
      <svg width="66" height="18" viewBox="1299 708 66 18">
        <path d="M1307 712h3v3h-3zM1311 712h3v3h-3zM1315 712h3v3h-3zM1307 716h3v3h-3zM1311 716h3v3h-3zM1315 716h3v3h-3zM1307 720h3v3h-3zM1311 720h3v3h-3zM1315 720h3v3h-3zM1328 712h11v7h-11zM1328 720h3v3h-3zM1332 720h3v3h-3zM1336 720h3v3h-3z" fill="#bcbcbc" />
        <path d="M1349 712h11v11h-11z" fill="#666" />
      </svg>
    </div>
  );
}

export default function App() {
  return (
    <div className="flex h-[726px] w-[1365px] flex-col overflow-hidden bg-white">
      <TitleBar />
      <MenuBar />
      <Toolbar />
      <div className="flex min-h-0 flex-1">
        <SidePanel />
        <Canvas />
      </div>
      <Tabs />
      <StatusBar />
    </div>
  );
}
